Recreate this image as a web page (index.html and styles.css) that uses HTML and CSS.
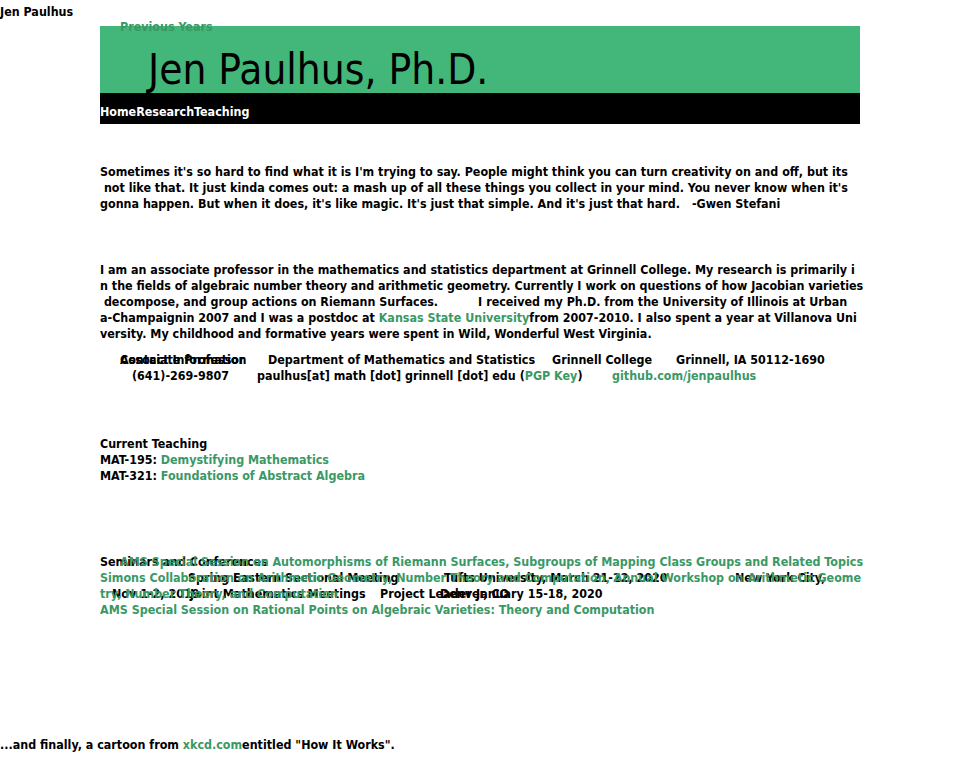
FILE: index.html
```html
<!DOCTYPE html>
<html lang="en">
<head>
    <meta charset="UTF-8">
    <title>Jen Paulhus, Ph.D.</title>
    <link rel="stylesheet" href="styles.css">
</head>
<body>
<div class="site-name">Jen Paulhus</div>
<div class="page">
    <div class="banner">
        <a class="prev-years" href="#">Previous Years</a>
        <h1>Jen Paulhus, Ph.D.</h1>
    </div>
    <div class="nav"><a href="#">Home</a><a href="#">Research</a><a href="#">Teaching</a></div>

    <p class="quote">Sometimes it's so hard to find what it is I'm trying to say. People might think you can turn creativity on and off, but its<br> not like that. It just kinda comes out: a mash up of all these things you collect in your mind. You never know when it's<br>gonna happen. But when it does, it's like magic. It's just that simple. And it's just that hard.<span class="author">-Gwen Stefani</span></p>

    <p class="about">I am an associate professor in the mathematics and statistics department at Grinnell College. My research is primarily i<br>n the fields of algebraic number theory and arithmetic geometry. Currently I work on questions of how Jacobian varieties<br> decompose, and group actions on Riemann Surfaces.<span class="gap"></span>I received my Ph.D. from the University of Illinois at Urban<br>a-Champaignin 2007 and I was a postdoc at <a href="#">Kansas State University</a>from 2007-2010. I also spent a year at Villanova Uni<br>versity. My childhood and formative years were spent in Wild, Wonderful West Virginia.</p>

    <div class="contact">
        <div class="contact-row row-one">
            <span class="cell"><span class="contact-label">Contact Information</span>Associate Professor</span>
            <span class="cell">Department of Mathematics and Statistics</span>
            <span class="cell">Grinnell College</span>
            <span class="cell">Grinnell, IA 50112-1690</span>
        </div>
        <div class="contact-row row-two">
            <span class="cell">(641)-269-9807</span>
            <span class="cell">paulhus[at] math [dot] grinnell [dot] edu (<a href="#">PGP Key</a>)</span>
            <span class="cell"><a href="#">github.com/jenpaulhus</a></span>
        </div>
    </div>

    <div class="teaching">
        <div>Current Teaching</div>
        <div>MAT-195: <a href="#">Demystifying Mathematics</a></div>
        <div>MAT-321: <a href="#">Foundations of Abstract Algebra</a></div>
    </div>

    <div class="seminars">
        <div class="sem-plain">
            <div>Seminars and Conferences</div>
            <div class="sem-line sem-line-2">
                <span>Spring Eastern Sectional Meeting</span>
                <span>Tufts University, March 21-22, 2020</span>
                <span>New York City,</span>
            </div>
            <div class="sem-line sem-line-3">
                <span>Nov 1-2, 2019</span>
                <span>Joint Mathematics Meetings</span>
                <span>Project Leader</span>
                <span>Denver, CO</span>
                <span>January 15-18, 2020</span>
            </div>
        </div>
        <div class="sem-titles">
            <div class="first-title"><a href="#">AMS Special Session on Automorphisms of Riemann Surfaces, Subgroups of Mapping Class Groups and Related Topics</a></div>
            <div><a href="#">Simons Collaboration on Arithmetic Geometry, Number Theory and Computation, Annual Workshop on Arithmetic Geome</a></div>
            <div><a href="#">try, Number Theory, and Computation</a></div>
            <div><a href="#">AMS Special Session on Rational Points on Algebraic Varieties: Theory and Computation</a></div>
        </div>
    </div>
</div>
<p class="footer">...and finally, a cartoon from <a href="#">xkcd.com</a>entitled "How It Works".</p>
</body>
</html>
```

FILE: styles.css
```css
* {
    margin: 0;
    padding: 0;
}
body {
    font-family: "DejaVu Sans Condensed", "DejaVu Sans", sans-serif;
    font-size: 12.4px;
    font-weight: bold;
    line-height: 16px;
    color: #000;
    background: #fff;
}
a {
    color: #3a9865;
    text-decoration: none;
}
.site-name {
    height: 20px;
    padding-top: 4px;
    box-sizing: border-box;
}
.page {
    width: 760px;
    margin: 6px 0 0 100px;
}
.banner {
    position: relative;
    height: 67px;
    padding-top: 21px;
    box-sizing: border-box;
    background-color: #43b77a;
}
.banner .prev-years {
    position: absolute;
    top: -7px;
    left: 20px;
    line-height: 16px;
}
.banner h1 {
    font-weight: normal;
    font-size: 42px;
    line-height: 46px;
    padding-left: 48px;
}
.nav {
    height: 31px;
    padding-top: 11px;
    box-sizing: border-box;
    background-color: #000;
}
.nav a {
    color: #fff;
}
.quote {
    margin-top: 40px;
    white-space: pre;
}
.quote .author {
    margin-left: 12px;
}
.about {
    margin-top: 50px;
    white-space: pre;
}
.about .gap {
    display: inline-block;
    width: 40px;
}
.contact {
    margin-top: 10px;
}
.contact-row {
    display: grid;
    white-space: nowrap;
}
.row-one {
    padding-left: 20px;
    grid-template-columns: 148px 284px 124px auto;
}
.row-two {
    padding-left: 32px;
    grid-template-columns: 125px 355px auto;
}
.contact .cell {
    position: relative;
}
.contact-label {
    position: absolute;
    left: 0;
    top: 0;
}
.teaching {
    margin-top: 52px;
}
.seminars {
    position: relative;
    margin-top: 70px;
    height: 64px;
}
.sem-line {
    display: grid;
    white-space: nowrap;
}
.sem-line-2 {
    padding-left: 88px;
    grid-template-columns: 256px 291px auto;
}
.sem-line-3 {
    padding-left: 12px;
    grid-template-columns: 78px 190px 60px 36px auto;
}
.sem-titles {
    position: absolute;
    top: 0;
    left: 0;
    width: 780px;
    white-space: nowrap;
}
.sem-titles .first-title {
    padding-left: 20px;
}
.footer {
    margin-top: 119px;
}
```
